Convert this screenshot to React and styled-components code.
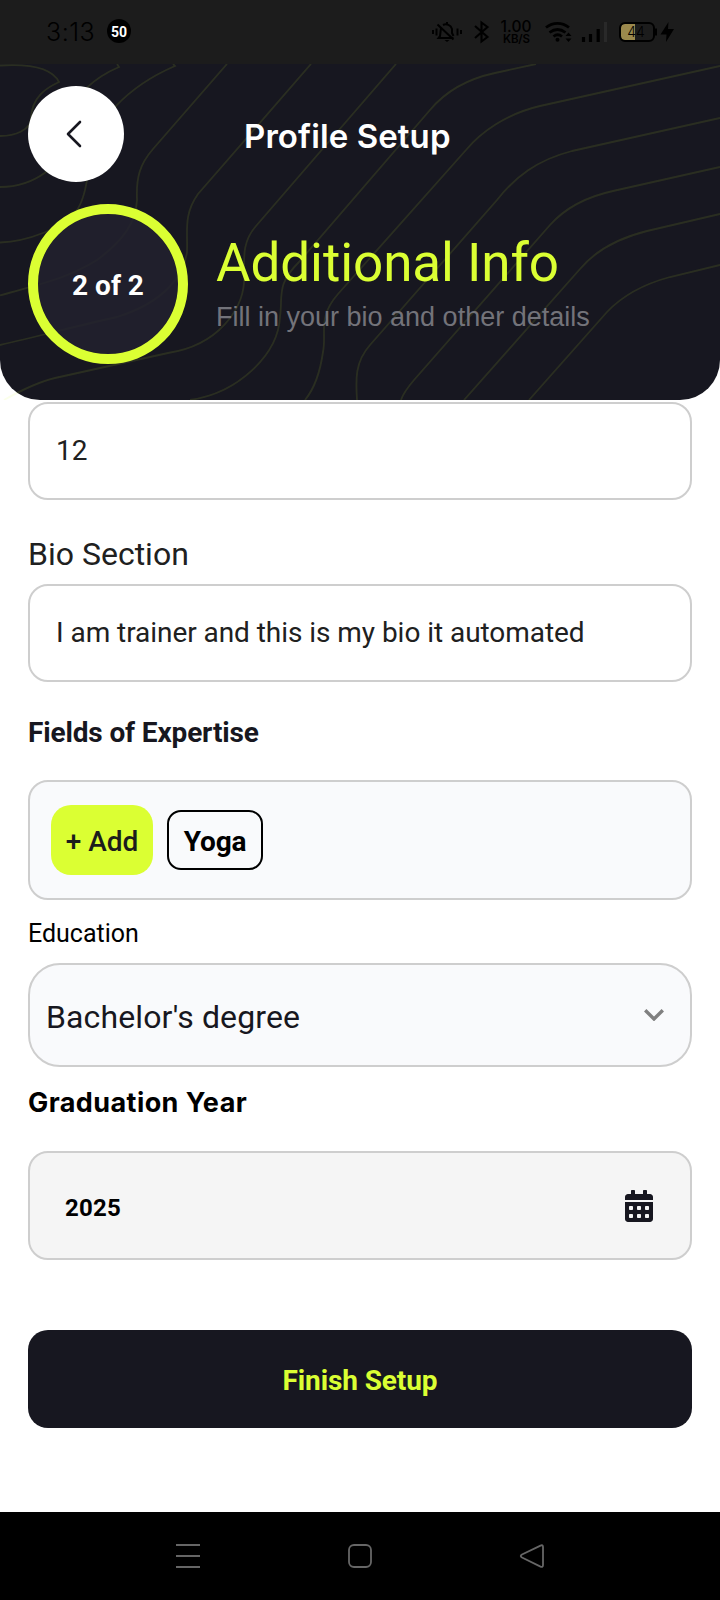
import React from "react";
import styled, { createGlobalStyle } from "styled-components";
import { FaCalendarAlt } from "react-icons/fa";

const lime = "#dbff33";
const ink = "#171720";

const GlobalStyle = createGlobalStyle`
  * { box-sizing: border-box; }
  body { margin: 0; background: #fff; font-family: Roboto, sans-serif; }
  button { font-family: inherit; border: 0; padding: 0; cursor: pointer; }
`;

const Screen = styled.div`
  width: 720px;
  height: 1600px;
  display: flex;
  flex-direction: column;
  overflow: hidden;
`;

const StatusBar = styled.div`
  height: 64px;
  flex: none;
  display: flex;
  justify-content: space-between;
  background: #1c1c1c;
  color: #000;
  padding-left: 46px;
`;

const StatusLeft = styled.div`
  display: flex;
  align-items: center;
  gap: 12px;
`;

const Clock = styled.span`
  width: 49px;
  font: 300 25px/32px Inter, sans-serif;
  letter-spacing: 0.5px;
  white-space: nowrap;
`;

const Count = styled.span`
  width: 24px;
  height: 24px;
  margin-bottom: 2px;
  border-radius: 50%;
  background: #000;
  color: #fff;
  font: 700 14px/26px Roboto, sans-serif;
  text-align: center;
`;

const Header = styled.header`
  position: relative;
  height: 336px;
  flex: none;
  padding: 22px 28px 0;
  background: ${ink};
  border-radius: 0 0 40px 40px;
`;

const Contours = styled.svg`
  position: absolute;
  inset: 0;
  fill: none;
  stroke: rgba(219, 255, 51, 0.1);
  stroke-width: 1.8;
`;

const TopRow = styled.div`
  position: relative;
  display: flex;
  align-items: center;
`;

const BackButton = styled.button`
  width: 96px;
  height: 96px;
  border-radius: 50%;
  background: #fff;
  display: grid;
  place-items: center;
`;

const Title = styled.h1`
  margin: 0 0 0 120px;
  padding-top: 4px;
  font: 600 33px/40px Inter, sans-serif;
  letter-spacing: 0.1px;
  color: #fff;
  white-space: nowrap;
`;

const StepRow = styled.div`
  position: relative;
  display: flex;
  margin-top: 22px;
  gap: 28px;
`;

const StepRing = styled.div`
  width: 160px;
  height: 160px;
  border-radius: 50%;
  border: 10px solid ${lime};
  background: rgba(34, 33, 47, 0.84);
  background-clip: padding-box;
  color: #fff;
  font-size: 28px;
  font-weight: 700;
  line-height: 143px;
  text-align: center;
`;

const StepText = styled.div`
  padding-top: 27px;
  white-space: nowrap;
`;

const StepTitle = styled.h2`
  margin: 0;
  font-size: 53px;
  font-weight: 400;
  line-height: 64px;
  letter-spacing: -0.08px;
  color: ${lime};
`;

const StepHint = styled.p`
  margin: 4px 0 0;
  font: 400 27px/36px "Liberation Sans", sans-serif;
  color: #73737a;
`;

const Form = styled.main`
  height: 1112px;
  flex: none;
  display: flex;
  flex-direction: column;
  padding: 2px 28px 0;
`;

const Label = styled.label`
  display: block;
  margin: ${(p) => p.$m};
  font-family: ${(p) => p.$font || "Roboto"}, sans-serif;
  font-size: ${(p) => p.$size}px;
  font-weight: ${(p) => p.$weight || 400};
  line-height: ${(p) => p.$line}px;
  letter-spacing: ${(p) => p.$track || 0}px;
  color: ${(p) => p.$color || "#000"};
`;

const Field = styled.div`
  height: ${(p) => p.$h || 98}px;
  flex: none;
  display: flex;
  align-items: center;
  justify-content: space-between;
  padding: ${(p) => p.$pad || "0 26px 2px"};
  border: 2px solid #cecece;
  border-radius: ${(p) => p.$radius || 20}px;
  background: ${(p) => p.$bg || "#fff"};
`;

const Value = styled.span`
  padding-top: ${(p) => p.$drop || 0}px;
  font-size: ${(p) => p.$size || 28}px;
  font-weight: ${(p) => p.$weight || 400};
  letter-spacing: ${(p) => p.$track || 0}px;
  color: ${(p) => p.$color || "#202020"};
`;

const Tags = styled.div`
  display: flex;
  align-items: center;
  gap: 14px;
`;

const AddButton = styled.button`
  width: 102px;
  height: 70px;
  border-radius: 20px;
  background: ${lime};
  color: #1c1c1c;
  font-size: 28px;
  font-weight: 500;
  padding-top: 2px;
`;

const Tag = styled.span`
  width: 96px;
  height: 60px;
  border: 2px solid #000;
  border-radius: 14px;
  font-size: 28px;
  font-weight: 700;
  line-height: 59px;
  letter-spacing: -0.2px;
  text-align: center;
`;

const Submit = styled.button`
  height: 98px;
  flex: none;
  margin-top: 70px;
  padding-top: 2px;
  border-radius: 20px;
  background: ${ink};
  color: ${lime};
  font-size: 28px;
  font-weight: 700;
  letter-spacing: -0.1px;
`;

const NavBar = styled.nav`
  height: 88px;
  flex: none;
  display: flex;
  justify-content: center;
  gap: 144px;
  padding-top: 30px;
  background: #000;
`;

const NavIcon = styled.svg`
  width: 28px;
  height: 28px;
  fill: none;
  stroke: #666;
  stroke-width: 1.8;
`;

const StatusIcons = () => (
  <svg width="300" height="64" viewBox="420 0 300 64" fill="none" stroke="#000" strokeWidth="2">
    <path d="M433 30v4M436.500 28.500v7M461 30v4M457.500 28.500v7" />
    <path d="M441 28l-1 8-1.500 2h15M443 25a6.500 6.500 0 0 1 9 4v4l1.500 3M447 24v-2M437.500 24.500l16 15" />
    <path d="M444.500 40h5l-2.500 2z" fill="#000" stroke="none" />
    <path d="M475 26l12.500 11-6 4.500v-19l6 4.500L475 38" strokeWidth="2.100" />
    <text x="516" y="32" textAnchor="middle" textLength="31" fontFamily="Inter" fontSize="15.500" fontWeight="500" fill="#000" stroke="none">1.00</text>
    <text x="516.500" y="43" textAnchor="middle" textLength="27" fontFamily="Inter" fontSize="11.500" fontWeight="600" fill="#000" stroke="none">KB/S</text>
    <path d="M546 27.500c7-5.500 16-5.500 23 0M549.500 32.500c5-3.800 11-3.800 16 0M553.500 36.500c2.500-2 6-2 8.500 0" strokeWidth="2.800" />
    <circle cx="557.500" cy="39.700" r="2" fill="#000" stroke="none" />
    <path d="M565.500 36l3-3.500 3 3.500zM565.500 38.500l3 3.500 3-3.500z" fill="#000" stroke="none" />
    <path d="M583.500 37v5M590.500 34v8M598.200 29v13" strokeWidth="3.200" />
    <path d="M605.500 22v20" stroke="#292929" strokeWidth="3" />
    <path d="M625 24h10v16h-10q-4 0-4-4v-8q0-4 4-4z" fill="#9b894d" stroke="none" />
    <rect x="620" y="23" width="34" height="18" rx="5" />
    <path d="M656 28.500v7" />
    <text x="636" y="37.300" textAnchor="middle" fontFamily="Inter" fontSize="14" fontWeight="300" fill="#000" stroke="none">44</text>
    <path d="M668.500 22l-8 12.500h6l-.5 7.500 8-13h-6z" fill="#000" stroke="none" />
  </svg>
);

const contourPaths = [
  "M0 65.500C24 64 51 66 59 82C46 88 32 97 31 118C31 130 15 136 0 136",
  "M117 64L119 67C98 76 70 95 68 125C65 150 58 164 46 172C34 181 18 187 0 187",
  "M173 64L175 66C154 75 133 88 116 106C96 130 93 150 88 173C84 205 77 221 43 233C28 239 13 242 0 242.500",
  "M227 64L153 149C140 164 136 177 137 200C136 222 124 240 97 260C65 280 35 285 0 295.500",
  "M311 64L198 194C183 215 188 232 187 252C184 275 165 302 117 317C80 325 40 336 0 345",
  "M396 64L256 226C240 244 245 263 244 283C242 308 220 345 168 353L55 378C38 382 20 391 4 400",
  "M536 64L495 73C467 79 445 92 430 110L299 262C276 285 283 295 280 317C278 355 238 393 190 400",
  "M720 66L540 106C506 114 481 132 466 150L338 294C317 318 327 332 323 352C320 373 314 389 305 400",
  "M720 118L572 151C537 160 515 177 497 200L370 345C354 363 356 382 357 400",
  "M720 167L613 191C590 196 567 206 550 225L414 380C408 387 403 394 401 400",
  "M720 214L647 231C619 238 596 250 580 269L464 400",
  "M720 265L670 277C644 284 624 294 607 312L529 400",
];

export default function App() {
  return (
    <Screen>
      <GlobalStyle />
      <StatusBar>
        <StatusLeft>
          <Clock>3:13</Clock>
          <Count>50</Count>
        </StatusLeft>
        <StatusIcons />
      </StatusBar>
      <Header>
        <Contours width="720" height="336" viewBox="0 64 720 336">
          {contourPaths.map((d) => (
            <path key={d} d={d} />
          ))}
        </Contours>
        <TopRow>
          <BackButton aria-label="Back">
            <svg width="96" height="96" fill="none" stroke={ink} strokeWidth="2.600" strokeLinecap="round" strokeLinejoin="round">
              <path d="M52 36L40 48L52 60" />
            </svg>
          </BackButton>
          <Title>Profile Setup</Title>
        </TopRow>
        <StepRow>
          <StepRing>2 of 2</StepRing>
          <StepText>
            <StepTitle>Additional Info</StepTitle>
            <StepHint>Fill in your bio and other details</StepHint>
          </StepText>
        </StepRow>
      </Header>
      <Form>
        <Field>
          <Value>12</Value>
        </Field>
        <Label $m="34px 0 10px" $size={32} $line={40} $color="#202020">Bio Section</Label>
        <Field>
          <Value $track={-0.05}>I am trainer and this is my bio it automated</Value>
        </Field>
        <Label $m="33px 0 29px" $size={28} $weight={700} $line={36} $track={-0.14} $color={ink}>Fields of Expertise</Label>
        <Field $h={120} $pad="0 21px" $bg="#f9fafc">
          <Tags>
            <AddButton>+ Add</AddButton>
            <Tag>Yoga</Tag>
          </Tags>
        </Field>
        <Label $m="19px 0 14px" $size={25} $line={30}>Education</Label>
        <Field $h={104} $radius={32} $pad="0 26px 0 16px" $bg="#f9fafc">
          <Value $size={32} $drop={3} $track={0.12} $color={ink}>Bachelor's degree</Value>
          <svg width="20" height="12" fill="none" stroke="#808080" strokeWidth="3.400">
            <path d="M1.200 1.200L10 10L18.800 1.200" />
          </svg>
        </Field>
        <Label $m="18px 0 30px" $size={27} $weight={700} $line={36} $track={0.42} $font="Inter">Graduation Year</Label>
        <Field $h={109} $pad="0 35px" $bg="#f5f5f5">
          <Value $size={24} $weight={700} $drop={5} $track={0.2} $color="#000">2025</Value>
          <FaCalendarAlt size={32} color={ink} />
        </Field>
        <Submit>Finish Setup</Submit>
      </Form>
      <NavBar>
        <NavIcon viewBox="0 0 28 28"><path d="M2 3h24M2 14h24M2 25h24" /></NavIcon>
        <NavIcon viewBox="0 0 28 28"><rect x="3" y="3" width="22" height="22" rx="5" /></NavIcon>
        <NavIcon viewBox="0 0 28 28"><path d="M22.500 3.600L4 12.500Q1.500 14 4 15.500L22.500 24.600Q25 25.500 25 23V5Q25 2.500 22.500 3.600Z" /></NavIcon>
      </NavBar>
    </Screen>
  );
}
